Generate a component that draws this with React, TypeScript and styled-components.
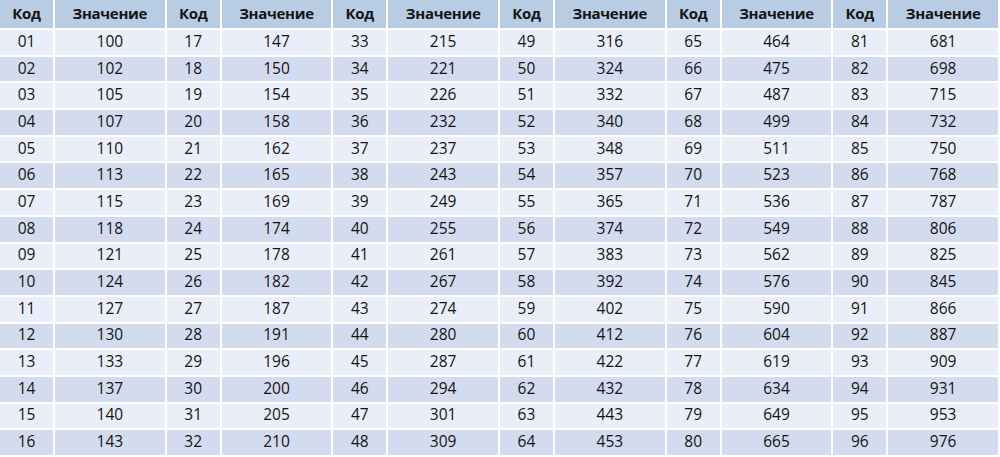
import styled, { createGlobalStyle } from "styled-components"

const GlobalStyle = createGlobalStyle`
  html, body {
    margin: 0;
    padding: 0;
    background: #ffffff;
  }
`

const values = [
  100, 102, 105, 107, 110, 113, 115, 118, 121, 124, 127, 130, 133, 137, 140, 143,
  147, 150, 154, 158, 162, 165, 169, 174, 178, 182, 187, 191, 196, 200, 205, 210,
  215, 221, 226, 232, 237, 243, 249, 255, 261, 267, 274, 280, 287, 294, 301, 309,
  316, 324, 332, 340, 348, 357, 365, 374, 383, 392, 402, 412, 422, 432, 443, 453,
  464, 475, 487, 499, 511, 523, 536, 549, 562, 576, 590, 604, 619, 634, 649, 665,
  681, 698, 715, 732, 750, 768, 787, 806, 825, 845, 866, 887, 909, 931, 953, 976,
]

const ROWS = 16
const GROUPS = 6

const App = () => {
  const rows = Array.from({ length: ROWS }, (_, r) => r)
  const groups = Array.from({ length: GROUPS }, (_, g) => g)

  return (
    <>
      <GlobalStyle />
      <Table>
        {groups.map((g) => (
          <Group key={"h" + g}>
            <HeadCell>Код</HeadCell>
            <HeadCell>Значение</HeadCell>
          </Group>
        ))}
        {rows.map((r) =>
          groups.map((g) => {
            const i = g * ROWS + r
            return (
              <Group key={i}>
                <Cell $dark={r % 2 === 1}>{String(i + 1).padStart(2, "0")}</Cell>
                <Cell $dark={r % 2 === 1}>{values[i]}</Cell>
              </Group>
            )
          })
        )}
      </Table>
    </>
  )
}

export default App

const Table = styled.div`
  width: 998px;
  height: 455px;
  display: grid;
  grid-template-columns: repeat(6, 53fr 109.7fr);
  grid-template-rows: 28px repeat(16, minmax(0, 1fr));
  gap: 2px;
  font-family: "Open Sans", "Noto Sans", sans-serif;
  color: #141414;
`

const Group = styled.div`
  display: contents;
`

const HeadCell = styled.div`
  background: #b8cce4;
  display: flex;
  align-items: center;
  justify-content: center;
  font-weight: 700;
  font-size: 15px;
  line-height: 18px;
  letter-spacing: -0.3px;
  padding-bottom: 3px;
`

const Cell = styled.div<{ $dark: boolean }>`
  background: ${(p) => (p.$dark ? "#d3dcee" : "#e9eef8")};
  display: flex;
  align-items: center;
  justify-content: center;
  font-size: 15.5px;
  line-height: 18px;
  padding-bottom: 3px;
`
